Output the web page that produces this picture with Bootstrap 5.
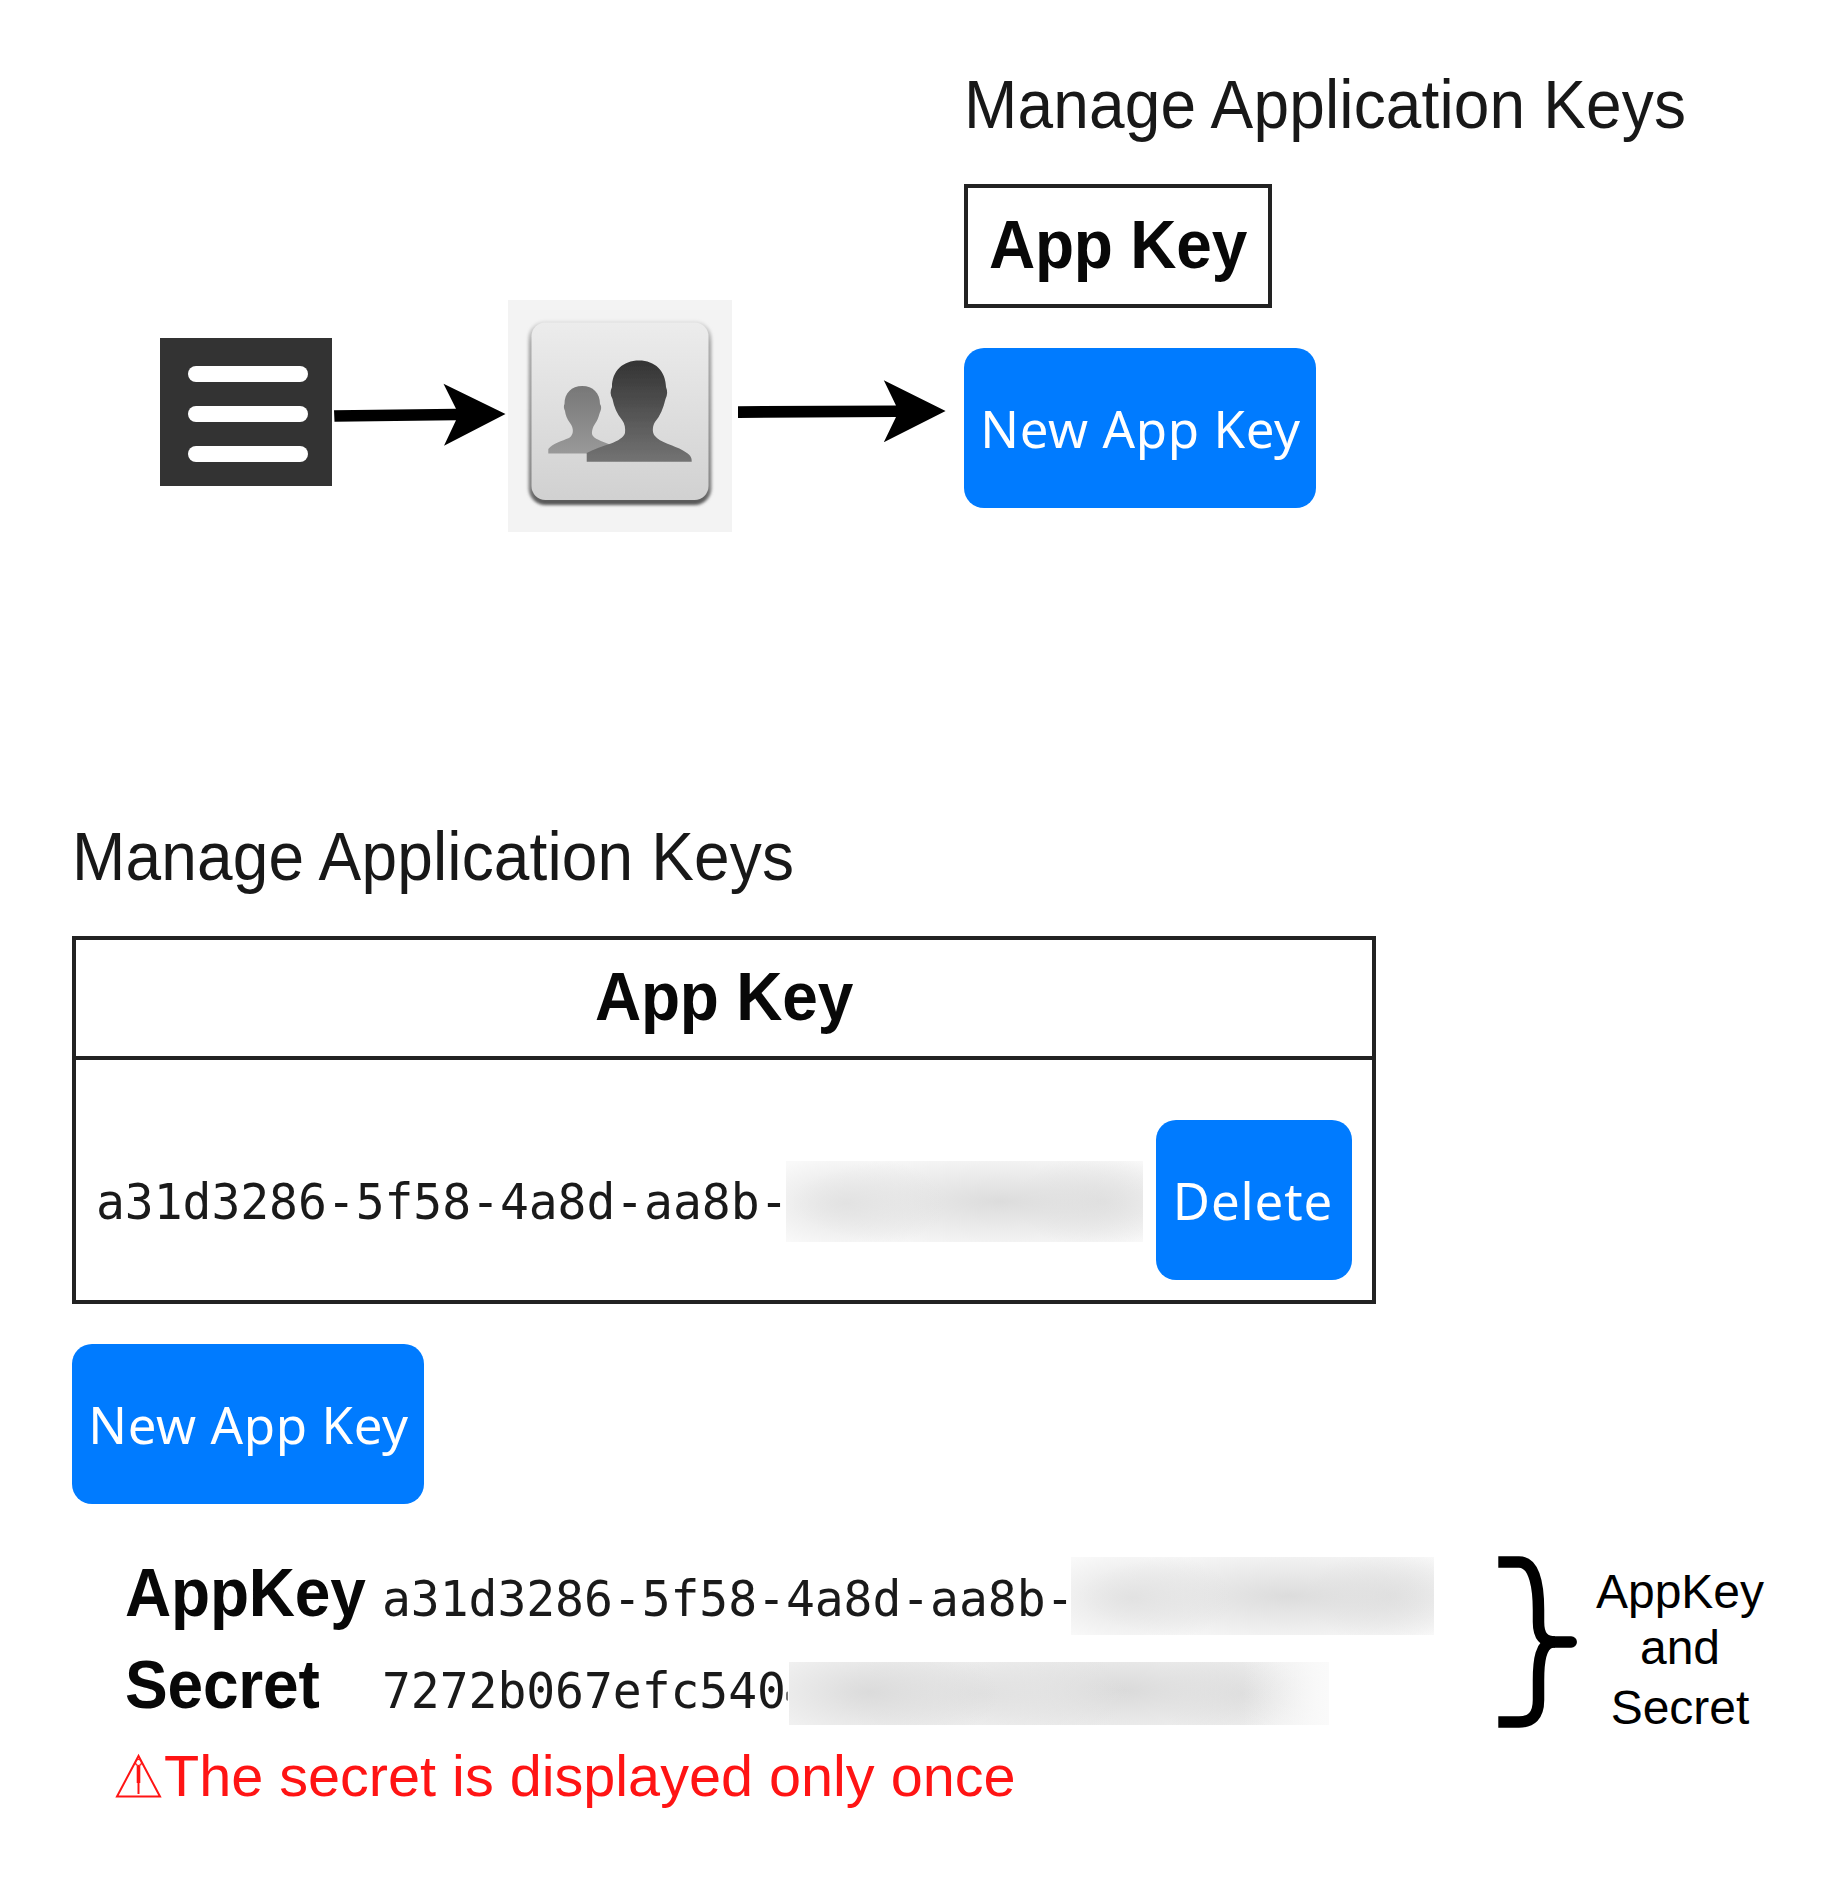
<!DOCTYPE html>
<html lang="en">
<head>
<meta charset="utf-8">
<meta name="viewport" content="width=device-width, initial-scale=1">
<title>Manage Application Keys</title>
<link rel="stylesheet" href="https://cdn.jsdelivr.net/npm/bootstrap@5.3.0/dist/css/bootstrap.min.css">
<style>
  body { font-family: "Liberation Sans", Arial, sans-serif; background: #fff; color: #000; width: 1844px; height: 1896px; overflow: hidden; }
  svg { display: block; }
  .txt-lg { font-size: 64px; line-height: 64px; white-space: nowrap; margin: 0; transform: translateY(.5px) scaleY(1.07); transform-origin: 0 54.2px; }
  .txt-lg.fw-bold { letter-spacing: -.2px; color: #080808; }
  .title { font-weight: 400; color: #181818; letter-spacing: .15px; }
  .flow-top { height: 826px; padding-left: 160px; }
  .burger { width: 172px; height: 148px; margin-top: 338px; background: #333; padding: 28px 24px 24px 28px; }
  .burger i { display: block; width: 120px; height: 16px; border-radius: 8px; background: #fff; }
  .arrow-a { margin-top: 380px; }
  .arrow-b { margin-top: 376px; }
  .tile { width: 224px; height: 232px; margin-top: 300px; background: #f3f3f3; }
  .pane { padding-top: 74px; }
  .keys { padding-left: 72px; }
  .key-frame { border: 4px solid #222; }
  .key-frame.one { width: 308px; height: 124px; margin-top: 46px; }
  .key-frame.two { width: 1304px; margin-top: 46px; }
  .key-head { height: 116px; }
  .key-body { height: 244px; border-top: 4px solid #222; padding: 60px 20px 0 20px; }
  .btn-key { --bs-btn-bg: #007bff; --bs-btn-color: #fff; --bs-btn-border-width: 0; --bs-btn-border-radius: 20px; --bs-btn-padding-x: 0; --bs-btn-padding-y: 0;
    height: 160px; font-family: "Noto Sans", sans-serif; font-size: 51px; line-height: 160px; letter-spacing: .6px; white-space: nowrap; }
  .btn-new { width: 352px; margin-top: 40px; padding-left: 1px; }
  .btn-del { width: 196px; margin-left: 13px; letter-spacing: .9px; padding-right: 2px; }
  .mono { font-family: "DejaVu Sans Mono", monospace; font-size: 48px; line-height: 64px; width: 690px; color: #1a1a1a; white-space: nowrap; letter-spacing: -.05px; transform: scaleY(1.04); transform-origin: 0 48.6px; }
  .haze { flex: none; }
  .haze-a { width: 357px; height: 81px; margin-top: 2px;
    background: radial-gradient(ellipse 100px 48px at 17% 52%, #e2e2e2, #e2e2e200), radial-gradient(ellipse 210px 52px at 60% 50%, #dcdcdc, #dcdcdc00), radial-gradient(ellipse 85px 48px at 88% 50%, #e4e4e4, #e4e4e400), #f9f9f9; }
  .haze-b { width: 540px; height: 63px;
    background: linear-gradient(to right, #fafafa00 84%, #fafafa80 94%, #fafafa), radial-gradient(ellipse 130px 56px at 15% 48%, #dbdbdb, #dbdbdb00), radial-gradient(ellipse 150px 54px at 36% 50%, #e1e1e1, #e1e1e100), radial-gradient(ellipse 180px 58px at 62% 45%, #dadada, #dadada00), radial-gradient(ellipse 90px 52px at 84% 50%, #e1e1e1, #e1e1e100), #f5f5f5; }
  .result { padding: 58px 0 0 125px; }
  .creds { width: 1371px; }
  .lbl { width: 256px; }
  .cred-row { height: 64px; }
  .cred-row.second { margin-top: 28px; }
  .cred-val { margin-top: 5px; padding-left: 1px; }
  .cred-val.partial { width: 408px; }
  /* edge of the first masked character */
  .cred-val.partial::after { content: ""; display: inline-block; width: 2px; height: 9px; margin-left: 0; vertical-align: 7px; background: #777; border-radius: 2px 0 0 2px; }
  .cred-haze { width: 363px; height: 78px; margin-top: -5px; }
  .second .haze-b { margin-top: 8px; }
  .warn { font-size: 57.6px; line-height: 64px; color: #ff1414; margin: 26px 0 0 -13px; white-space: nowrap; }
  .warn svg { margin: 8px 2px 0 3px; }
  .brace { margin-top: -8px; }
  .note { font-size: 48px; line-height: 57px; width: 180px; margin: 1px 0 0 10px; }
  .note .mid { margin-top: -1px; }
  .note .last { margin-top: 3px; }
</style>
<script src="https://cdn.jsdelivr.net/npm/bootstrap@5.3.0/dist/js/bootstrap.bundle.min.js"></script>
</head>
<body>
<section class="flow-top d-flex align-items-start">
  <div class="burger d-flex flex-column justify-content-between flex-shrink-0"><i></i><i></i><i></i></div>
  <svg class="arrow-a flex-shrink-0" width="176" height="70" viewBox="332 380 176 70"><path d="M334 410.2 456 408.8 443.5 383.8 505.5 414 444 445.8 456 420.3 334.5 421.8Z"/></svg>
  <div class="tile flex-shrink-0">
    <svg width="224" height="232" viewBox="0 0 224 232">
      <defs>
        <linearGradient id="face" x1="0" y1="0" x2="0" y2="1"><stop offset="0" stop-color="#ececec"/><stop offset="1" stop-color="#d1d1d1"/></linearGradient>
        <linearGradient id="edge" x1="0" y1="0" x2="0" y2="1"><stop offset="0" stop-color="#e2e2e2"/><stop offset=".12" stop-color="#aaa"/><stop offset=".9" stop-color="#808080"/><stop offset="1" stop-color="#505050"/></linearGradient>
        <linearGradient id="big" x1="0" y1="0" x2="0" y2="1"><stop offset="0" stop-color="#333"/><stop offset="1" stop-color="#737373"/></linearGradient>
        <linearGradient id="sml" x1="0" y1="0" x2="0" y2="1"><stop offset="0" stop-color="#777"/><stop offset="1" stop-color="#999"/></linearGradient>
        <filter id="soft" x="-10%" y="-10%" width="120%" height="120%"><feGaussianBlur stdDeviation="1.5"/></filter>
        <filter id="fine" x="-10%" y="-10%" width="120%" height="120%"><feGaussianBlur stdDeviation=".7"/></filter>
      </defs>
      <rect x="20.500" y="21" width="183" height="184" rx="17" fill="url(#edge)" filter="url(#soft)"/>
      <rect x="23.500" y="22.500" width="177" height="177.500" rx="14" fill="url(#face)" filter="url(#fine)"/>
      <g filter="url(#fine)">
      <path fill="url(#sml)" d="M74.300 86C85 86 92 93 92 104Q94 107 92.500 111C91 114 91 118 87.500 123C84 128 83 134 85 136C88 140 97 142 103 145L110 153.500H40.300V149C45 143 54 141 61 138C66 135 66 128 62 123C59 119 57.500 115 57 111Q55 107 56.500 104C56.500 93 63.500 86 74.300 86Z"/>
      <path fill="url(#big)" d="M131 60.500C147 60.500 157.500 71 158 87Q160.500 93 157.500 99C155.500 108 152 116 147 122C144.500 126 144 132 146.500 135.500C152 143 166 145 175 150.500C182 154.500 184 157 183.700 161.700H78.700V153C86 149 95 146 103 143.500C110 141 116 137 117 133C117.500 128 117 124 114 120C109 114 106 107 104.500 99Q101 93 104 87C104 71 115 60.500 131 60.500Z"/>
      </g>
    </svg>
  </div>
  <svg class="arrow-b flex-shrink-0" width="232" height="70" viewBox="732 376 232 70"><path d="M738 406.200 896 405.400 883.800 380.300 945.600 411 883.800 442.200 896 417 738 418Z"/></svg>
  <div class="pane flex-shrink-0">
    <h1 class="txt-lg title">Manage Application Keys</h1>
    <div class="key-frame one d-flex align-items-center justify-content-center"><div class="txt-lg fw-bold">App Key</div></div>
    <button type="button" class="btn btn-key btn-new">New App Key</button>
  </div>
</section>

<section class="keys d-flex flex-column align-items-start">
  <h2 class="txt-lg title">Manage Application Keys</h2>
  <div class="key-frame two">
    <div class="key-head d-flex align-items-center justify-content-center"><div class="txt-lg fw-bold">App Key</div></div>
    <div class="key-body">
      <div class="d-flex align-items-center">
        <div class="mono mt-1">a31d3286-5f58-4a8d-aa8b-</div>
        <div class="haze haze-a"></div>
        <button type="button" class="btn btn-key btn-del">Delete</button>
      </div>
    </div>
  </div>
  <button type="button" class="btn btn-key btn-new">New App Key</button>
</section>

<section class="result d-flex align-items-start">
  <div class="creds flex-shrink-0">
    <div class="cred-row d-flex align-items-start">
      <div class="txt-lg fw-bold lbl">AppKey</div>
      <div class="mono cred-val">a31d3286-5f58-4a8d-aa8b-</div>
      <div class="haze haze-a cred-haze"></div>
    </div>
    <div class="cred-row second d-flex align-items-start">
      <div class="txt-lg fw-bold lbl">Secret</div>
      <div class="mono cred-val partial">7272b067efc540</div>
      <div class="haze haze-b"></div>
    </div>
    <div class="warn d-flex align-items-start">
      <svg width="47" height="48" viewBox="0 0 47 48" fill="none" stroke="#ff1414" stroke-width="2"><path d="M23.500 4 2 44.500H45Z"/><path d="M23.500 14V31" stroke-width="3.600"/><path d="M23.500 31V42"/><circle cx="23.500" cy="10.500" r="3" stroke-width="1.200"/></svg>
      <span>The secret is displayed only once</span>
    </div>
  </div>
  <svg class="brace flex-shrink-0" width="84" height="176" viewBox="1496 1554 84 176" fill="none" stroke="#000" stroke-width="11.500"><path d="M1498.300 1562H1519C1536 1562 1538.500 1592 1538.500 1610V1622C1538.500 1636 1544 1642 1555 1642"/><path d="M1553 1642H1571.200" stroke-linecap="round"/><path d="M1552 1642C1541 1644 1538.500 1660 1538.500 1680V1700C1538.500 1716 1531 1722 1519 1722H1498.300"/></svg>
  <div class="note text-center flex-shrink-0"><div>AppKey</div><div class="mid">and</div><div class="last">Secret</div></div>
</section>
</body>
</html>
